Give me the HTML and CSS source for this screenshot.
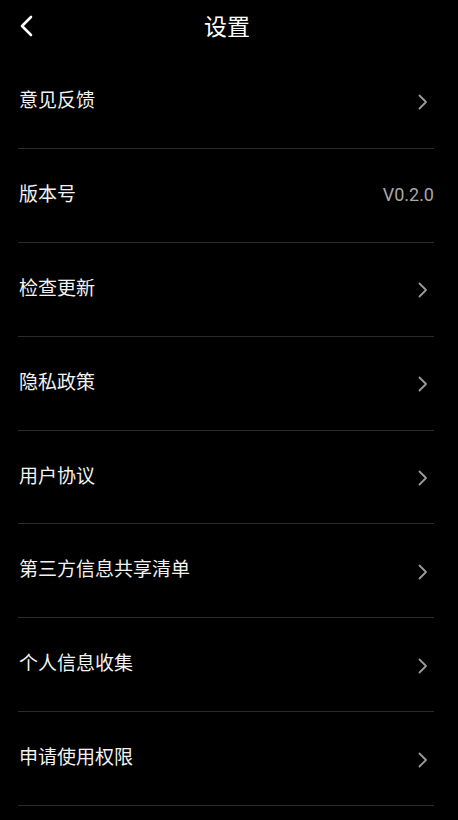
FILE: index.html
```html
<!DOCTYPE html>
<html lang="zh-CN">
<head>
<meta charset="utf-8">
<title>设置</title>
<link rel="stylesheet" href="styles.css">
</head>
<body>
<div class="page">
  <header class="topbar">
    <span class="back">
      <svg width="14" height="22" viewBox="0 0 14 22"><path d="M12 2 L3 11 L12 20" fill="none" stroke="#fff" stroke-width="2.6" stroke-linecap="round" stroke-linejoin="round"/></svg>
    </span>
    <h1 class="title">设置</h1>
  </header>
  <ul class="list">
    <li class="row"><span class="label">意见反馈</span><span class="arrow"><svg width="12" height="16" viewBox="0 0 12 16"><path d="M2.5 1.5 L9 8 L2.5 14.5" fill="none" stroke="#9a9a9a" stroke-width="1.8" stroke-linecap="round" stroke-linejoin="round"/></svg></span></li>
    <li class="row"><span class="label">版本号</span><span class="version">V0.2.0</span></li>
    <li class="row"><span class="label">检查更新</span><span class="arrow"><svg width="12" height="16" viewBox="0 0 12 16"><path d="M2.5 1.5 L9 8 L2.5 14.5" fill="none" stroke="#9a9a9a" stroke-width="1.8" stroke-linecap="round" stroke-linejoin="round"/></svg></span></li>
    <li class="row"><span class="label">隐私政策</span><span class="arrow"><svg width="12" height="16" viewBox="0 0 12 16"><path d="M2.5 1.5 L9 8 L2.5 14.5" fill="none" stroke="#9a9a9a" stroke-width="1.8" stroke-linecap="round" stroke-linejoin="round"/></svg></span></li>
    <li class="row"><span class="label">用户协议</span><span class="arrow"><svg width="12" height="16" viewBox="0 0 12 16"><path d="M2.5 1.5 L9 8 L2.5 14.5" fill="none" stroke="#9a9a9a" stroke-width="1.8" stroke-linecap="round" stroke-linejoin="round"/></svg></span></li>
    <li class="row"><span class="label">第三方信息共享清单</span><span class="arrow"><svg width="12" height="16" viewBox="0 0 12 16"><path d="M2.5 1.5 L9 8 L2.5 14.5" fill="none" stroke="#9a9a9a" stroke-width="1.8" stroke-linecap="round" stroke-linejoin="round"/></svg></span></li>
    <li class="row"><span class="label">个人信息收集</span><span class="arrow"><svg width="12" height="16" viewBox="0 0 12 16"><path d="M2.5 1.5 L9 8 L2.5 14.5" fill="none" stroke="#9a9a9a" stroke-width="1.8" stroke-linecap="round" stroke-linejoin="round"/></svg></span></li>
    <li class="row"><span class="label">申请使用权限</span><span class="arrow"><svg width="12" height="16" viewBox="0 0 12 16"><path d="M2.5 1.5 L9 8 L2.5 14.5" fill="none" stroke="#9a9a9a" stroke-width="1.8" stroke-linecap="round" stroke-linejoin="round"/></svg></span></li>
  </ul>
</div>
</body>
</html>
```
FILE: styles.css
```css
html, body {
  margin: 0;
  padding: 0;
  background: #000;
}
body {
  font-family: "Noto Sans CJK SC", "Noto Sans", sans-serif;
  color: #fff;
}
.page {
  width: 458px;
  min-height: 820px;
  background: #000;
}
.topbar {
  height: 54px;
  display: flex;
  align-items: center;
  justify-content: center;
  position: relative;
}
.back {
  position: absolute;
  left: 19px;
  top: 15px;
  display: flex;
}
.title {
  margin: 0 0 0 -4px;
  padding-bottom: 4px;
  font-size: 23px;
  font-weight: 400;
  line-height: 1;
  color: #fff;
}
.list {
  list-style: none;
  margin: 0 24px 0 18px;
  padding: 0;
}
.row {
  height: 92.86px;
  border-bottom: 1px solid #2b2b2b;
  display: flex;
  align-items: center;
  justify-content: space-between;
}
.row:first-child {
  height: 94px;
}
.label {
  font-size: 19px;
  line-height: 1;
  padding-left: 1px;
  padding-bottom: 6px;
  color: #f2f2f2;
}
.arrow {
  display: flex;
  margin-right: 5px;
  margin-top: 2px;
}
.version {
  font-family: Roboto, "Liberation Sans", sans-serif;
  font-size: 18px;
  color: #a8a8a8;
  padding-bottom: 2px;
}
```
